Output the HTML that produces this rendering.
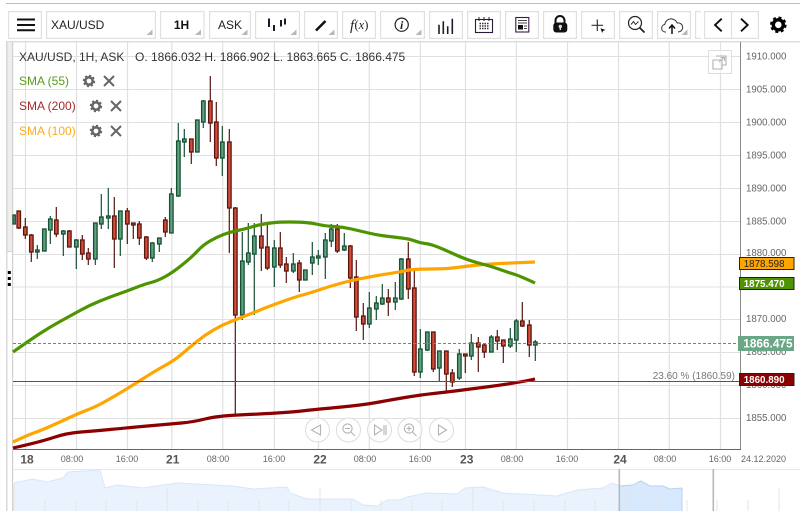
<!DOCTYPE html>
<html><head><meta charset="utf-8"><style>
html,body{margin:0;padding:0;background:#fff;width:800px;height:511px;overflow:hidden}
svg{display:block;filter:blur(.3px)}
text{font-family:"Liberation Sans",sans-serif}
.ax{font-size:9.7px;fill:#666}
.tm{font-size:9px;fill:#666;text-anchor:middle}
.dy{font-size:12px;font-weight:bold;fill:#555;text-anchor:middle}
.g{fill:#5fa37f;stroke:#174f34;stroke-width:1.3}
.r{fill:#d84c38;stroke:#561710;stroke-width:1.3}
.b{fill:#fff;stroke:#e0e0e0;stroke-width:1.2}
.t{fill:#b8b8b8}
</style></head><body>
<svg width="800" height="511" viewBox="0 0 800 511" xmlns="http://www.w3.org/2000/svg">
<rect x="6" y="3" width="794" height="1" fill="#bdbdbd"/>

<!-- toolbar buttons -->
<rect class="b" x="8.6" y="11.6" width="32.8" height="26.8"/>
<rect class="b" x="46.6" y="11.6" width="108.8" height="26.8"/>
<rect class="b" x="160.6" y="11.6" width="43.4" height="26.8"/>
<rect class="b" x="209.6" y="11.6" width="40.8" height="26.8"/>
<rect class="b" x="255.6" y="11.6" width="43.8" height="26.8"/>
<rect class="b" x="304.6" y="11.6" width="32.8" height="26.8"/>
<rect class="b" x="342.6" y="11.6" width="32.8" height="26.8"/>
<rect class="b" x="380.6" y="11.6" width="43.8" height="26.8"/>
<rect class="b" x="429.6" y="11.6" width="32.8" height="26.8"/>
<rect class="b" x="467.6" y="11.6" width="32.8" height="26.8"/>
<rect class="b" x="505.6" y="11.6" width="32.8" height="26.8"/>
<rect class="b" x="543.6" y="11.6" width="32.8" height="26.8"/>
<rect class="b" x="581.6" y="11.6" width="32.8" height="26.8"/>
<rect class="b" x="619.6" y="11.6" width="32.8" height="26.8"/>
<rect class="b" x="657.6" y="11.6" width="32.8" height="26.8"/>
<path d="M701 11.6H695.6V38.4H701" fill="none" stroke="#e0e0e0" stroke-width="1.2"/>
<rect class="b" x="704.6" y="11.6" width="53.8" height="26.8"/>
<path d="M731.5 11.6V38.4" stroke="#e0e0e0" stroke-width="1.2"/>

<!-- triangles -->
<path class="t" d="M152.5 29.5V35H146.5Z"/>
<path class="t" d="M201 29.5V35H195Z"/>
<path class="t" d="M247.5 29.5V35H241.5Z"/>
<path class="t" d="M296.5 29.5V35H290.5Z"/>
<path class="t" d="M334.5 29.5V35H328.5Z"/>
<path class="t" d="M421.5 29.5V35H415.5Z"/>
<path class="t" d="M687.5 29.5V35H681.5Z"/>

<!-- toolbar icons -->
<path d="M17 19.5H35M17 25H35M17 30.3H35" stroke="#111" stroke-width="2"/>
<text x="51" y="29" font-size="12" fill="#222">XAU/USD</text>
<text x="181.5" y="29" font-size="12" font-weight="bold" fill="#111" text-anchor="middle">1H</text>
<text x="230" y="29" font-size="12" fill="#222" text-anchor="middle">ASK</text>
<path d="M269 18.5V27M274 25V31M281 20V26.5M285 18.5V24.5" stroke="#1a1a2a" stroke-width="2"/>
<path d="M316 30.5L325.5 21" stroke="#111" stroke-width="2.6"/>
<text x="350" y="30" font-size="15" style="font-family:'Liberation Serif',serif" font-style="italic" fill="#222">f</text>
<text x="354.5" y="29" font-size="12.5" style="font-family:'Liberation Serif',serif" fill="#222">(<tspan font-style="italic">x</tspan>)</text>
<circle cx="401.7" cy="24.7" r="6.6" fill="none" stroke="#222" stroke-width="1.2"/>
<text x="401.7" y="29" font-size="12" style="font-family:'Liberation Serif',serif" font-style="italic" font-weight="bold" fill="#222" text-anchor="middle">i</text>
<path d="M439 24.7V34M443.3 21.3V34M447.7 26.3V34M452.3 18.7V34" stroke="#1c1c28" stroke-width="1.6"/>
<rect x="475.5" y="19.5" width="17" height="13" fill="none" stroke="#2a1a3a" stroke-width="1.1"/>
<path d="M479 17V21M484 17V21M489 17V21" stroke="#2a1a3a" stroke-width="1"/>
<path d="M479.5 23.5H489M479.5 26H489M479.5 28.5H489" stroke="#333" stroke-width="1.4" stroke-dasharray="1.5 1"/>
<rect x="515.8" y="17.5" width="13" height="14.5" fill="none" stroke="#3a1a4a" stroke-width="1.1"/>
<path d="M518 20.5H527M518 23H527" stroke="#444" stroke-width="1"/>
<rect x="518" y="25" width="5" height="4.5" fill="#111"/>
<path d="M524 26H527M524 28.5H527" stroke="#444" stroke-width="1"/>
<path d="M555.5 23V20.5a4.5 4.5 0 0 1 9 0V23" fill="none" stroke="#111" stroke-width="2"/>
<rect x="553.3" y="22.5" width="14" height="10" rx="3" fill="#111"/>
<circle cx="560.3" cy="26.5" r="1.7" fill="#ddd"/><rect x="559.6" y="27" width="1.4" height="3" fill="#ddd"/>
<path d="M597.3 19.5V31M591.5 25.3H603" stroke="#333" stroke-width="1.2"/>
<path d="M600.5 28.3L605.5 30L603 31L602.2 33Z" fill="#111"/>
<circle cx="635" cy="23" r="6.5" fill="none" stroke="#222" stroke-width="1.2"/>
<path d="M639.5 27.5L644.5 32.5" stroke="#222" stroke-width="1.8"/>
<path d="M631 24.5L633.5 21.5L635.5 24.5L638.5 21.5" fill="none" stroke="#333" stroke-width="1"/>
<path d="M666 32H665a3.8 3.8 0 0 1 -.3 -7.5a6.5 6.5 0 0 1 12.5 -1.5a4.5 4.5 0 0 1 2 8.8L678 32" fill="none" stroke="#333" stroke-width="1"/>
<path d="M672 34V26M669 28.5L672 25L675 28.5" fill="none" stroke="#111" stroke-width="1.5"/>
<path d="M721.7 18.7L715 25L721.7 31.3M741 18.7L747.7 25L741 31.3" fill="none" stroke="#111" stroke-width="1.9"/>
<circle cx="778.3" cy="24.8" r="5" fill="none" stroke="#000" stroke-width="3.4"/>
<circle cx="778.3" cy="24.8" r="7.3" fill="none" stroke="#000" stroke-width="2" stroke-dasharray="3 2.73"/>

<!-- chart frame -->
<rect x="6" y="41" width="794" height="1.4" fill="#dcdcdc"/>
<rect x="7" y="42" width="5.5" height="209" fill="#eeeeee"/>
<path d="M6.8 42V511M12.6 42V511" stroke="#d0d0d0" stroke-width="1.2"/>
<path d="M7 251.5H12.5" stroke="#d0d0d0" stroke-width="1"/>
<path d="M7.8 271H10.8V274H7.8ZM7.8 277H10.8V280H7.8ZM7.8 283H10.8V286H7.8Z" fill="#000"/>

<!-- grid -->
<path d="M13 56.5H740M13 89.5H740M13 122.5H740M13 155.5H740M13 188.5H740M13 221.5H740M13 254.5H740M13 287H740M13 319.5H740M13 352.5H740M13 385.5H740M13 418.5H740" stroke="#e0e0e0" stroke-width="1.1"/>
<path d="M25.5 42V449M76.5 42V449M127.5 42V449M171.8 42V449M222.7 42V449M274.3 42V449M318.5 42V449M369.3 42V449M420.3 42V449M465.5 42V449M516.3 42V449M567.5 42V449M618.5 42V449M669.3 42V449M720.5 42V449" stroke="#e0e0e0" stroke-width="1.2"/>

<!-- top-right icon -->
<rect x="708.5" y="50.5" width="23" height="23" fill="#fff" fill-opacity=".6" stroke="#dedede" stroke-width="1"/>
<path d="M716 56H726V65H722M713 60H722V69H713Z" fill="none" stroke="#b0b0b0" stroke-width="1.1"/>
<path d="M719 62L724 57.5M720.5 57.5H724.5V61" fill="none" stroke="#b0b0b0" stroke-width="1"/>

<!-- wicks -->
<path fill="none" stroke="#174f34" stroke-width="1.2" d="M37.3 245V259M50.3 216V244M63.3 230V256M76.3 239V269M95.3 223V265M101.3 194V229M108.3 188V229M120.3 211V256M152.3 242V262M159.3 238V252M171.3 188V233M178.3 123V197M184.3 129V157M203.3 100V128M222.3 126V176M242.3 232V320M248.3 223V265M254.3 223V315M274.3 240V287M293.3 253V273M312.3 242V275M318.3 250V265M325.3 233V279M331.3 224V247M344.3 233V251M369.3 292V328M376.3 296V320M382.3 284V305M395.3 282V310M401.3 258V300M420.3 329V378M427.3 332V351M439.3 351V381M459.3 349V380M471.3 334V360M491.3 335V352M510.3 328V348M516.3 319V352M535.3 340V361"/>
<path fill="none" stroke="#561710" stroke-width="1.2" d="M18.7 211V229M25.3 218V239M31.3 234V262M56.3 207V237M69.3 230V247M82.3 235V260M88.3 248V265M114.3 197V268M127.3 208V244M133.3 223V239M139.3 221V245M146.3 236V260M165.3 217V237M191.3 139V164M210.3 76V142M216.3 102V166M229.3 129V253M235.3 207V414M261.3 214V271M267.3 223V270M280.3 232V268M286.3 257V283M299.3 260V292M337.3 224V253M350.3 245V288M356.3 260V331M363.3 303V340M388.3 289V316M408.3 242V299M414.3 269V376M433.3 332V372M446.3 351V392M452.3 369V387M465.3 354V373M478.3 337V372M484.3 343V358M497.3 330V350M503.3 340V363M522.3 302V327M529.3 320V357"/>

<!-- green bodies -->
<g class="g">
<rect x="13" y="215" width="2.3" height="9"/>
<rect x="35.6" y="250" width="3.5" height="2"/>
<rect x="42.6" y="229" width="3.5" height="22"/>
<rect x="48.6" y="219" width="3.5" height="11"/>
<rect x="61.6" y="231" width="3.5" height="3"/>
<rect x="74.6" y="240" width="3.5" height="7"/>
<rect x="93.6" y="223" width="3.5" height="36"/>
<rect x="99.6" y="217" width="3.5" height="7"/>
<rect x="106.6" y="216" width="3.5" height="2"/>
<rect x="118.6" y="211" width="3.5" height="28"/>
<rect x="150.6" y="243" width="3.5" height="15"/>
<rect x="157.6" y="238" width="3.5" height="6"/>
<rect x="169.6" y="194" width="3.5" height="39"/>
<rect x="176.6" y="141" width="3.5" height="55"/>
<rect x="182.6" y="139" width="3.5" height="3"/>
<rect x="195.6" y="120" width="3.5" height="32"/>
<rect x="201.6" y="101" width="3.5" height="21"/>
<rect x="220.6" y="142" width="3.5" height="16"/>
<rect x="240.6" y="261" width="3.5" height="54"/>
<rect x="246.6" y="253" width="3.5" height="9"/>
<rect x="252.6" y="236" width="3.5" height="18"/>
<rect x="272.6" y="248" width="3.5" height="19"/>
<rect x="291.6" y="264" width="3.5" height="7"/>
<rect x="303.6" y="270" width="3.5" height="10"/>
<rect x="310.6" y="257" width="3.5" height="6"/>
<rect x="316.6" y="256" width="3.5" height="2"/>
<rect x="323.6" y="240" width="3.5" height="17"/>
<rect x="329.6" y="229" width="3.5" height="12"/>
<rect x="342.6" y="246" width="3.5" height="4"/>
<rect x="367.6" y="308" width="3.5" height="16"/>
<rect x="374.6" y="303" width="3.5" height="6"/>
<rect x="380.6" y="298" width="3.5" height="6"/>
<rect x="393.6" y="298" width="3.5" height="4"/>
<rect x="399.6" y="259" width="3.5" height="40"/>
<rect x="418.6" y="349" width="3.5" height="23"/>
<rect x="425.6" y="332" width="3.5" height="18"/>
<rect x="437.6" y="351" width="3.5" height="17"/>
<rect x="457.6" y="354" width="3.5" height="24"/>
<rect x="469.6" y="343" width="3.5" height="13"/>
<rect x="489.6" y="337" width="3.5" height="15"/>
<rect x="508.6" y="339" width="3.5" height="7"/>
<rect x="514.6" y="321" width="3.5" height="19"/>
<rect x="533.6" y="342" width="3.5" height="3"/>
</g>
<!-- red bodies -->
<g class="r">
<rect x="17" y="211" width="3.5" height="17"/>
<rect x="23.6" y="227" width="3.5" height="8"/>
<rect x="29.6" y="235" width="3.5" height="17"/>
<rect x="54.6" y="220" width="3.5" height="14"/>
<rect x="67.6" y="231" width="3.5" height="16"/>
<rect x="80.6" y="240" width="3.5" height="14"/>
<rect x="86.6" y="253" width="3.5" height="6"/>
<rect x="112.6" y="216" width="3.5" height="23"/>
<rect x="125.6" y="211" width="3.5" height="13"/>
<rect x="131.6" y="223" width="3.5" height="2"/>
<rect x="137.6" y="224" width="3.5" height="14"/>
<rect x="144.6" y="237" width="3.5" height="21"/>
<rect x="163.6" y="220" width="3.5" height="12"/>
<rect x="189.6" y="139" width="3.5" height="13"/>
<rect x="208.6" y="101" width="3.5" height="22"/>
<rect x="214.6" y="122" width="3.5" height="36"/>
<rect x="227.6" y="142" width="3.5" height="66"/>
<rect x="233.6" y="208" width="3.5" height="107"/>
<rect x="259.6" y="236" width="3.5" height="12"/>
<rect x="265.6" y="247" width="3.5" height="21"/>
<rect x="278.6" y="248" width="3.5" height="17"/>
<rect x="284.6" y="264" width="3.5" height="7"/>
<rect x="297.6" y="263" width="3.5" height="17"/>
<rect x="335.6" y="229" width="3.5" height="22"/>
<rect x="348.6" y="246" width="3.5" height="32"/>
<rect x="354.6" y="277" width="3.5" height="40"/>
<rect x="361.6" y="316" width="3.5" height="8"/>
<rect x="386.6" y="298" width="3.5" height="4"/>
<rect x="406.6" y="259" width="3.5" height="30"/>
<rect x="412.6" y="288" width="3.5" height="84"/>
<rect x="431.6" y="332" width="3.5" height="37"/>
<rect x="444.6" y="351" width="3.5" height="23"/>
<rect x="450.6" y="373" width="3.5" height="9"/>
<rect x="463.6" y="354" width="3.5" height="2"/>
<rect x="476.6" y="343" width="3.5" height="4"/>
<rect x="482.6" y="345" width="3.5" height="7"/>
<rect x="495.6" y="337" width="3.5" height="4"/>
<rect x="501.6" y="340" width="3.5" height="6"/>
<rect x="520.6" y="321" width="3.5" height="5"/>
<rect x="527.6" y="325" width="3.5" height="20"/>
</g>

<!-- moving averages -->
<path fill="none" stroke="#ffa500" stroke-width="3.2" stroke-linecap="butt" d="M13,442 Q28,435 35,432.5 Q42,430 51,426 Q60,422 68.5,418 Q77,414 86,410.5 Q95,407 101.5,403.5 Q108,400 119,393.5 Q130,387 142.5,379 Q155,371 165,365.5 Q175,360 182.5,353.5 Q190,347 197.5,341 Q205,335 213.5,330 Q222,325 231,321.5 Q240,318 247.5,315 Q255,312 262.5,309 Q270,306 282.5,301.5 Q295,297 302.5,295 Q310,293 323.5,288.5 Q337,284 352,280.5 Q367,277 383.5,274.5 Q400,272 406.5,270.5 Q413,269 430,269 Q447,269 457,267.5 Q467,266 478.5,265 Q490,264 500,263.5 Q510,263 535,262"/>
<path fill="none" stroke="#4e9300" stroke-width="3.2" d="M13,352 Q30,340 40,333.5 Q50,327 60,321.5 Q70,316 80,310.5 Q90,305 100,301 Q110,297 118.5,294 Q127,291 136,287.5 Q145,284 151,282.5 Q157,281 164.5,277 Q172,273 182,265 Q192,257 197.5,251 Q203,245 210,241 Q217,237 223.5,234.5 Q230,232 237.5,230.5 Q245,229 251.5,227 Q258,225 264,224 Q270,223 275,222.5 Q280,222 289,222 Q298,222 305,222.5 Q312,223 318.5,224.5 Q325,226 334,226.5 Q343,227 351.5,229 Q360,231 368.5,233 Q377,235 385,236 Q393,237 401.5,238 Q410,239 415,241 Q420,243 425,243.5 Q430,244 436.5,246.5 Q443,249 455,254.5 Q467,260 478.5,263 Q490,266 498.5,269 Q507,272 513.5,274 Q520,276 535,283"/>
<path fill="none" stroke="#8b0000" stroke-width="3.2" d="M13,448 Q40,442 53.5,437.5 Q67,433 81,432 Q95,431 110,429.5 Q125,428 147.5,426 Q170,424 181.5,423 Q193,422 205,419 Q217,416 238.5,415 Q260,414 276.5,413 Q293,412 301.5,411 Q310,410 336.5,407.5 Q363,405 376.5,402.5 Q390,400 405,397.5 Q420,395 433.5,393.5 Q447,392 455,391 Q463,390 490,386.5 Q517,383 535,379"/>

<!-- price lines -->
<path d="M13 343.5H738" stroke="#5c9078" stroke-width="1" stroke-dasharray="3 2"/>
<path d="M13 381.5H740" stroke="#555" stroke-width="1"/>
<text x="735" y="379" font-size="10" fill="#777" text-anchor="end">23.60 % (1860.59)</text>

<!-- axes -->
<path d="M740.5 42V450" stroke="#888" stroke-width="1"/>
<path d="M13 449.5H741" stroke="#666" stroke-width="1"/>

<text class="ax" x="746" y="59.5">1910.000</text>
<text class="ax" x="746" y="92.5">1905.000</text>
<text class="ax" x="746" y="125.5">1900.000</text>
<text class="ax" x="746" y="158.5">1895.000</text>
<text class="ax" x="746" y="191.5">1890.000</text>
<text class="ax" x="746" y="224.5">1885.000</text>
<text class="ax" x="746" y="256">1880.000</text>
<text class="ax" x="746" y="322">1870.000</text>
<text class="ax" x="746" y="355">1865.000</text>
<text class="ax" x="746" y="388">1860.000</text>
<text class="ax" x="746" y="421">1855.000</text>

<!-- tags -->
<rect x="739.5" y="257.5" width="54.5" height="12" fill="#ffa500" stroke="#222"/>
<text x="743.7" y="267" font-size="9.8" fill="#222">1878.598</text>
<rect x="739.5" y="277.5" width="54.5" height="12" fill="#4e9300" stroke="#222"/>
<text x="743.7" y="287" font-size="9.8" font-weight="bold" fill="#fff">1875.470</text>
<rect x="738" y="336" width="56" height="15" fill="#6aa786"/>
<text x="743.3" y="347.5" font-size="11.8" font-weight="bold" fill="#fff">1866.475</text>
<rect x="739.5" y="373.5" width="54.5" height="12" fill="#8b0000" stroke="#222"/>
<text x="743.7" y="383" font-size="9.8" font-weight="bold" fill="#fff">1860.890</text>

<!-- legend -->
<text x="19" y="61" font-size="12" fill="#333">XAU/USD, 1H, ASK</text>
<text x="135" y="61" font-size="12" fill="#333">O. 1866.032 H. 1866.902 L. 1863.665 C. 1866.475</text>
<text x="19" y="85" font-size="12" fill="#5a9a18">SMA (55)</text>
<text x="19" y="110" font-size="12" fill="#a32a2a">SMA (200)</text>
<text x="19" y="135" font-size="12" fill="#ffab1a">SMA (100)</text>
<g fill="none" stroke="#666">
<circle cx="89" cy="81" r="3.7" stroke-width="2.6"/><circle cx="89" cy="81" r="5.4" stroke-width="1.6" stroke-dasharray="2.2 2"/>
<circle cx="96" cy="106" r="3.7" stroke-width="2.6"/><circle cx="96" cy="106" r="5.4" stroke-width="1.6" stroke-dasharray="2.2 2"/>
<circle cx="96" cy="131" r="3.7" stroke-width="2.6"/><circle cx="96" cy="131" r="5.4" stroke-width="1.6" stroke-dasharray="2.2 2"/>
<path stroke-width="2" d="M104 76L114 86M114 76L104 86M111 101L121 111M121 101L111 111M111 126L121 136M121 126L111 136"/>
</g>

<!-- nav buttons -->
<g fill="#fff" fill-opacity=".7" stroke="#dcdcdc" stroke-width="1">
<circle cx="317.5" cy="430" r="12"/><circle cx="348.5" cy="430" r="12"/><circle cx="379.5" cy="430" r="12"/><circle cx="410" cy="430" r="12"/><circle cx="441.5" cy="430" r="12"/>
</g>
<g fill="none" stroke="#b4b4b4" stroke-width="1.1">
<path d="M320.5 425V435L311.5 430Z"/>
<circle cx="347.5" cy="428.5" r="4.6"/><path d="M345 428.5H350M351 432L355 436"/>
<path d="M374.5 425V435L382 430Z M384 425V435M386 425V435"/>
<circle cx="409" cy="428.5" r="4.6"/><path d="M406.5 428.5H411.5M409 426V431M412.5 432L416.5 436"/>
<path d="M438.5 425V435L446.5 430Z"/>
</g>

<!-- time axis labels -->
<text class="dy" x="27" y="463.5">18</text>
<text class="tm" x="72" y="462">08:00</text>
<text class="tm" x="127" y="462">16:00</text>
<text class="dy" x="172.7" y="463.5">21</text>
<text class="tm" x="218" y="462">08:00</text>
<text class="tm" x="274" y="462">16:00</text>
<text class="dy" x="320" y="463.5">22</text>
<text class="tm" x="365" y="462">08:00</text>
<text class="tm" x="420" y="462">16:00</text>
<text class="dy" x="466.7" y="463.5">23</text>
<text class="tm" x="512" y="462">08:00</text>
<text class="tm" x="567" y="462">16:00</text>
<text class="dy" x="620" y="463.5">24</text>
<text class="tm" x="665" y="462">08:00</text>
<text class="tm" x="720" y="462">16:00</text>
<text class="tm" x="763.5" y="462">24.12.2020</text>

<!-- navigator -->
<path d="M13 469.5H800" stroke="#e8e8e8" stroke-width="1"/>
<path d="M14 483L33 479L47 482L63 478L68 472L100 470L105 488L117 485L143 488L177 483L233 486L253 489L287 487L290 493L307 499L353 499L363 505L377 506L387 500L400 500L407 497L427 493L457 494L465 488L483 487L503 493L557 496L577 490L603 488L612 483L620 486V511H14Z" fill="#eaf3fd" stroke="none"/>
<path d="M620 486L633 485L641 481L650 486L663 486L670 489L682 488V511H620Z" fill="#d8e9fe"/>
<path d="M14 483L33 479L47 482L63 478L68 472L100 470L105 488L117 485L143 488L177 483L233 486L253 489L287 487L290 493L307 499L353 499L363 505L377 506L387 500L400 500L407 497L427 493L457 494L465 488L483 487L503 493L557 496L577 490L603 488L612 483L620 486" fill="none" stroke="#d8e6fa" stroke-width="1"/>
<path d="M620 486L633 485L641 481L650 486L663 486L670 489L682 488V511" fill="none" stroke="#b4d0f6" stroke-width="1"/>
<path d="M14 484V511M45 500V511M76 500V511M106 500V511M137 500V511M167 488V511M198 500V511M228 500V511M259 500V511M289 500V511M320 488V511M351 500V511M381 500V511M412 500V511M442 500V511M473 488V511M503 500V511M534 500V511M565 500V511M595 500V511M626 488V511M657 500V511M687 500V511M717 500V511M748 500V511M779 488V511" stroke="#e4e4e4" stroke-width="1"/>
<path d="M619.3 469V511M713.3 469V511" stroke="#b8b8b8" stroke-width="1.6"/>
</svg>
</body></html>
